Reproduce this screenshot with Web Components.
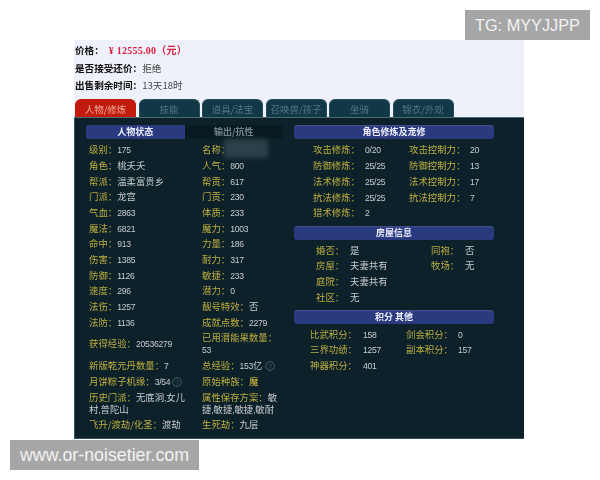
<!DOCTYPE html>
<html lang="zh-CN">
<head>
<meta charset="utf-8">
<title>角色详情</title>
<style>
html, body { margin: 0; background: #fff; }
body { font-family: "Noto Sans CJK SC", sans-serif; width: 600px; height: 480px; overflow: hidden; }
</style>
</head>
<body>
<role-sheet>
  <price-line label="价格：" tone="price" value="¥ 12555.00（元）" slot="head"></price-line>
  <price-line label="是否接受还价：" value="拒绝" slot="head"></price-line>
  <price-line label="出售剩余时间：" value="13天18时" slot="head"></price-line>

  <sheet-tab active slot="tabs">人物/修炼</sheet-tab>
  <sheet-tab slot="tabs">技能</sheet-tab>
  <sheet-tab slot="tabs">道具/法宝</sheet-tab>
  <sheet-tab slot="tabs">召唤兽/孩子</sheet-tab>
  <sheet-tab slot="tabs">坐骑</sheet-tab>
  <sheet-tab slot="tabs">锦衣/外观</sheet-tab>

  <div slot="left">
    <split-bar first="人物状态" second="输出/抗性"></split-bar>
    <stat-list>
      <flow-stat label="级别：" value="175"></flow-stat>
      <flow-stat label="名称：" masked></flow-stat>
      <flow-stat label="角色：" value="桃夭夭"></flow-stat>
      <flow-stat label="人气：" value="800"></flow-stat>
      <flow-stat label="帮派：" value="温柔富贵乡"></flow-stat>
      <flow-stat label="帮贡：" value="617"></flow-stat>
      <flow-stat label="门派：" value="龙宫"></flow-stat>
      <flow-stat label="门贡：" value="230"></flow-stat>
      <flow-stat label="气血：" value="2863"></flow-stat>
      <flow-stat label="体质：" value="233"></flow-stat>
      <flow-stat label="魔法：" value="6821"></flow-stat>
      <flow-stat label="魔力：" value="1003"></flow-stat>
      <flow-stat label="命中：" value="913"></flow-stat>
      <flow-stat label="力量：" value="186"></flow-stat>
      <flow-stat label="伤害：" value="1385"></flow-stat>
      <flow-stat label="耐力：" value="317"></flow-stat>
      <flow-stat label="防御：" value="1126"></flow-stat>
      <flow-stat label="敏捷：" value="233"></flow-stat>
      <flow-stat label="速度：" value="296"></flow-stat>
      <flow-stat label="潜力：" value="0"></flow-stat>
      <flow-stat label="法伤：" value="1257"></flow-stat>
      <flow-stat label="靓号特效：" value="否"></flow-stat>
      <flow-stat label="法防：" value="1136"></flow-stat>
      <flow-stat label="成就点数：" value="2279"></flow-stat>
      <flow-stat label="获得经验：" value="20536279"></flow-stat>
      <flow-stat label="已用潜能果数量：" value="53"></flow-stat>
      <flow-stat label="新版乾元丹数量：" value="7"></flow-stat>
      <flow-stat label="总经验：" value="153亿" hint></flow-stat>
      <flow-stat label="月饼粽子机缘：" value="3/54" hint></flow-stat>
      <flow-stat label="原始种族：" value="魔" gold></flow-stat>
      <flow-stat label="历史门派：" value="无底洞,女儿村,普陀山"></flow-stat>
      <flow-stat label="属性保存方案：" value="敏捷,敏捷,敏捷,敏耐"></flow-stat>
      <flow-stat label="飞升/渡劫/化圣：" value="渡劫"></flow-stat>
      <flow-stat label="生死劫：" value="九层"></flow-stat>
    </stat-list>
  </div>

  <div slot="right">
    <title-bar>角色修炼及宠修</title-bar>
    <cell-table cols="52px 44px 61px 1fr" pad="19" top="2.6" bottom="5.9">
      <cell-stat label="攻击修炼：" value="0/20"></cell-stat>
      <cell-stat label="攻击控制力：" value="20"></cell-stat>
      <cell-stat label="防御修炼：" value="25/25"></cell-stat>
      <cell-stat label="防御控制力：" value="13"></cell-stat>
      <cell-stat label="法术修炼：" value="25/25"></cell-stat>
      <cell-stat label="法术控制力：" value="17"></cell-stat>
      <cell-stat label="抗法修炼：" value="25/25"></cell-stat>
      <cell-stat label="抗法控制力：" value="7"></cell-stat>
      <cell-stat label="猎术修炼：" value="2"></cell-stat>
    </cell-table>
    <title-bar>房屋信息</title-bar>
    <cell-table cols="34px 81px 34px 1fr" pad="22" top="2" bottom="5.2">
      <cell-stat label="婚否：" value="是"></cell-stat>
      <cell-stat label="同袍：" value="否"></cell-stat>
      <cell-stat label="房屋：" value="夫妻共有"></cell-stat>
      <cell-stat label="牧场：" value="无"></cell-stat>
      <cell-stat label="庭院：" value="夫妻共有"></cell-stat>
      <cell-stat label="" value=""></cell-stat>
      <cell-stat label="社区：" value="无"></cell-stat>
    </cell-table>
    <title-bar>积分 其他</title-bar>
    <cell-table cols="53px 43px 52px 1fr" pad="16" top="2" bottom="0">
      <cell-stat label="比武积分：" value="158"></cell-stat>
      <cell-stat label="剑会积分：" value="0"></cell-stat>
      <cell-stat label="三界功绩：" value="1257"></cell-stat>
      <cell-stat label="副本积分：" value="157"></cell-stat>
      <cell-stat label="神器积分：" value="401"></cell-stat>
    </cell-table>
  </div>
</role-sheet>
<water-mark style="top:10px;left:465px;width:125px;height:30px;font-size:16.3px">TG: MYYJJPP</water-mark>
<water-mark style="top:440px;left:10px;width:189px;height:30px;font-size:17.8px">www.or-noisetier.com</water-mark>

<script>
// numbers are narrower than the cjk glyphs in the original, so they get their own span
function wrapNums(s) {
  return s.replace(/[0-9\/.,]+/g, function(m){ return '<span class="n">' + m + '</span>'; });
}

function shadow(el, html) {
  el.attachShadow({mode: 'open'}).innerHTML = html;
}

class RoleSheet extends HTMLElement {
  constructor(){
    super();
    shadow(this, `<style>
      :host { display: block; box-sizing: border-box; width: 450px; margin: 40px 0 0 74px; filter: blur(.35px); }
      .head { background: #eef0fa; display: flex; flex-direction: column; padding: 2px 0 0 1px; height: 57px; }
      .tabs { background: #eef0fa; display: flex; gap: 2.5px; padding-left: 1px; height: 18px; }
      .body { background: #0d212b; height: 322px; box-sizing: border-box; border-top: 1px solid #4a6b72; padding: 7px 30px 0 12px;
              display: flex; gap: 11px; box-shadow: inset 1px 0 #33505c, inset 0 -1px #33505c; }
      .left { width: 197px; flex: none; }
      .right { width: 200px; flex: none; }
    </style>
    <div class="head"><slot name="head"></slot></div>
    <div class="tabs"><slot name="tabs"></slot></div>
    <div class="body">
      <div class="left"><slot name="left"></slot></div>
      <div class="right"><slot name="right"></slot></div>
    </div>`);
  }
}

class PriceLine extends HTMLElement {
  constructor(){
    super();
    var price = this.getAttribute('tone') == 'price';
    shadow(this, `<style>
      :host { display: block; height: 17.5px; line-height: 17.5px; font-size: 9.6px; color: #222; white-space: pre; }
      b { font-weight: 700; color: #111; }
      .price { color: #d8203f; font-weight: 700; margin-left: 5px; font-family: "Liberation Serif", "Noto Sans CJK SC", serif; font-size: 10px; letter-spacing: .25px; }
      .plain { color: #444; }
    </style><b>${this.getAttribute('label')}</b><span class="${price ? 'price' : 'plain'}">${this.getAttribute('value')}</span>`);
  }
}

class SheetTab extends HTMLElement {
  constructor(){
    super();
    shadow(this, `<style>
      :host { display: flex; align-items: center; justify-content: center; box-sizing: border-box; width: 61px; height: 18px;
              background: #113846; color: #55757f; font-size: 9.5px; border-radius: 6px 6px 0 0;
              border: 1px solid #254e5b; border-bottom: 0; }
      :host([active]) { background: #c21b0d; border-color: #c21b0d; color: #eda894; }
    </style><slot></slot>`);
  }
}

class SplitBar extends HTMLElement {
  constructor(){
    super();
    shadow(this, `<style>
      :host { display: flex; height: 14px; background: #0a1a22; border-radius: 3px; font-size: 9px; line-height: 14px; font-weight: 700; text-align: center; }
      div { flex: 1; }
      .on { background: #2a3a7e; color: #eef0ff; border-radius: 2px 0 0 2px; }
      .off { color: #72858a; }
    </style><div class="on">${this.getAttribute('first')}</div><div class="off">${this.getAttribute('second')}</div>`);
  }
}

class TitleBar extends HTMLElement {
  constructor(){
    super();
    shadow(this, `<style>
      :host { display: block; height: 14px; line-height: 14px; box-sizing: border-box; background: linear-gradient(#46558f 0, #2a3a7e 2px, #2a3a7e 100%);
              border-radius: 3px; color: #eef0ff; font-size: 9px; font-weight: 700; text-align: center; }
    </style><slot></slot>`);
  }
}

class StatList extends HTMLElement {
  constructor(){
    super();
    shadow(this, `<style>
      :host { display: grid; grid-template-columns: 113px 82px; align-items: center; padding: 2.4px 0 0 3px; }
    </style><slot></slot>`);
  }
}

class FlowStat extends HTMLElement {
  constructor(){
    super();
    var value = this.getAttribute('value') || '';
    var hint = this.hasAttribute('hint') ? `<svg width="10" height="10" viewBox="0 0 10 10"><circle cx="5" cy="5" r="4.3" fill="none" stroke="#45606a"/><text x="5" y="7.5" text-anchor="middle" font-size="7" fill="#45606a" font-family="Liberation Sans">?</text></svg>` : '';
    var mask = this.hasAttribute('masked') ? '<i></i>' : '';
    shadow(this, `<style>
      :host { display: block; position: relative; padding: 1.85px 16px 1.85px 0; font-size: 9.4px; line-height: 12px; color: #c8cccc; }
      :host(:nth-child(even)) { padding-right: 0; }
      .k { color: #bdae3e; }
      .v.gold { color: #d4bd3c; }
      .n { font-family: "Liberation Sans", sans-serif; font-size: 8.6px; letter-spacing: -.25px; line-height: 0; }
      svg { vertical-align: -2px; margin-left: 2px; height: 10px; margin-top: -2px; }
      i { position: absolute; left: 22px; top: -2px; width: 44px; height: 19px; background: #2b4149; filter: blur(2.5px); }
    </style><span class="k">${this.getAttribute('label')}</span><span class="v ${this.hasAttribute('gold') ? 'gold' : ''}">${wrapNums(value)}</span>${hint}${mask}`);
  }
}

class CellTable extends HTMLElement {
  constructor(){
    super();
    shadow(this, `<style>
      :host { display: grid; grid-template-columns: ${this.getAttribute('cols')}; align-items: center;
              padding: ${this.getAttribute('top')}px 0 ${this.getAttribute('bottom')}px ${this.getAttribute('pad')}px; }
    </style><slot></slot>`);
  }
}

class CellStat extends HTMLElement {
  constructor(){
    super();
    shadow(this, `<style>
      :host { display: contents; }
      div { padding: 1.85px 0; font-size: 9.4px; line-height: 12px; white-space: nowrap; min-height: 12px; }
      .k { color: #bdae3e; }
      .v { color: #c8cccc; }
      .n { font-family: "Liberation Sans", sans-serif; font-size: 8.6px; letter-spacing: -.25px; line-height: 0; }
    </style><div class="k">${this.getAttribute('label')}</div><div class="v">${wrapNums(this.getAttribute('value'))}</div>`);
  }
}

class WaterMark extends HTMLElement {
  constructor(){
    super();
    shadow(this, `<style>
      :host { position: absolute; display: flex; align-items: center; justify-content: center; background: #a6a6a6; color: #f2f2f2;
              font-family: "Liberation Sans", sans-serif; white-space: nowrap; }
    </style><slot></slot>`);
  }
}

customElements.define('role-sheet', RoleSheet);
customElements.define('price-line', PriceLine);
customElements.define('sheet-tab', SheetTab);
customElements.define('split-bar', SplitBar);
customElements.define('title-bar', TitleBar);
customElements.define('stat-list', StatList);
customElements.define('flow-stat', FlowStat);
customElements.define('cell-table', CellTable);
customElements.define('cell-stat', CellStat);
customElements.define('water-mark', WaterMark);
</script>
</body>
</html>
